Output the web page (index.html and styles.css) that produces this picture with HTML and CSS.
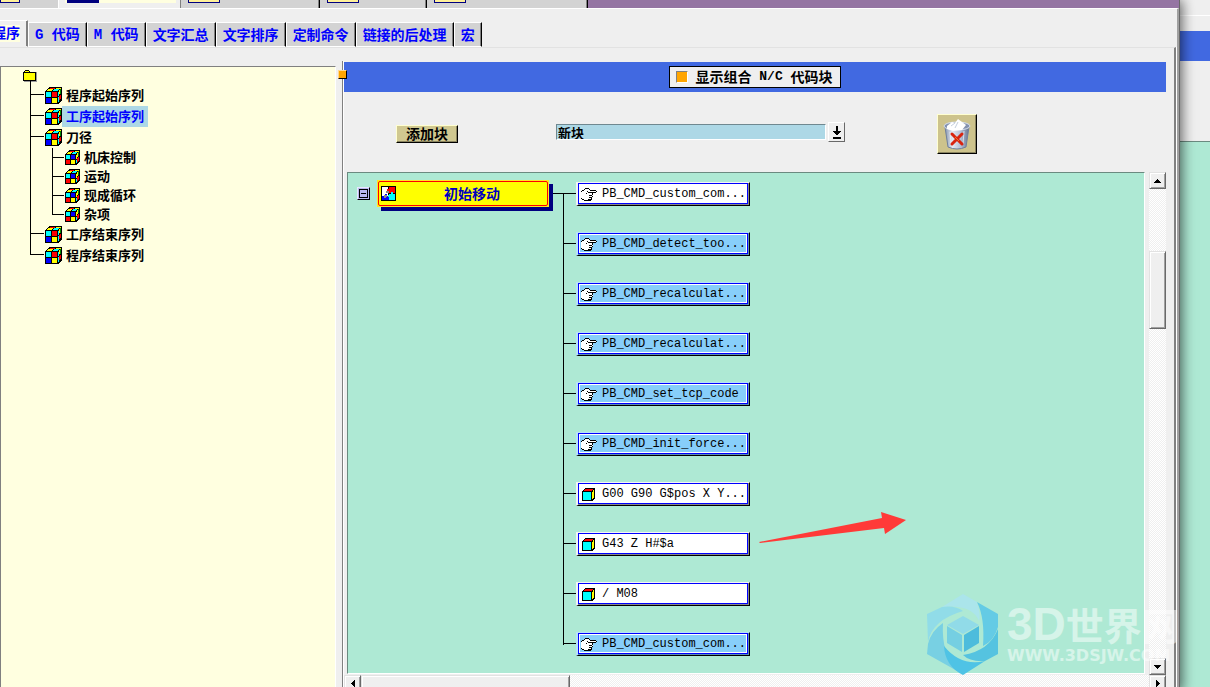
FILE: index.html
```
<!DOCTYPE html>
<html lang="zh-CN">
<head>
<meta charset="utf-8">
<title>后处理构造器</title>
<link rel="stylesheet" href="styles.css">
</head>
<body>
<svg class="defs" width="0" height="0" aria-hidden="true">
  <symbol id="cube-a" viewBox="0 0 17 17">
    <path d="M4 0h13v13l-4 4H0V4z" fill="#000"/>
    <path d="M5 1h5v1H4z M5 1h5v1H5z" fill="#f00"/><path d="M11 1h5v1h-5z" fill="#ff0"/>
    <path d="M3 2h5v1H3z" fill="#ff0"/><path d="M9 2h5v1H9z" fill="#0ff"/>
    <path d="M2 3h5v1H2z" fill="#ff0"/><path d="M8 3h5v1H8z" fill="#0ff"/>
    <path d="M13 5h1v4h-1z" fill="#0ff"/><path d="M13 10h1v5h-1z" fill="#0ff"/>
    <path d="M14 3h1v4h-1z" fill="#ff0"/><path d="M14 9h1v4h-1z" fill="#f00"/>
    <path d="M15 2h1v5h-1z" fill="#080"/><path d="M15 8h1v4h-1z" fill="#f00"/>
    <path d="M1 5h5v5H1z" fill="#0ff"/><path d="M7 5h5v5H7z" fill="#f00"/>
    <path d="M1 11h5v5H1z" fill="#00f"/><path d="M7 11h5v5H7z" fill="#ff0"/>
  </symbol>
  <symbol id="cube-b" viewBox="0 0 15 15">
    <path d="M4 0h11v11l-4 4H0V4z" fill="#000"/>
    <path d="M5 1h4v1H5z" fill="#f00"/><path d="M10 1h4v1h-4z" fill="#ff0"/>
    <path d="M3 2h4v1H3z" fill="#ff0"/><path d="M8 2h4v1H8z" fill="#0ff"/>
    <path d="M2 3h4v1H2z" fill="#ff0"/><path d="M7 3h4v1H7z" fill="#0ff"/>
    <path d="M11 5h1v4h-1z" fill="#ff0"/><path d="M11 10h1v3h-1z" fill="#0ff"/>
    <path d="M13 2h1v4h-1z" fill="#080"/><path d="M13 7h1v4h-1z" fill="#f00"/>
    <path d="M12 3h1v4h-1z" fill="#ff0"/><path d="M12 8h1v4h-1z" fill="#f00"/>
    <path d="M1 5h4v4H1z" fill="#0ff"/><path d="M6 5h4v4H6z" fill="#00f"/>
    <path d="M1 10h4v4H1z" fill="#f00"/><path d="M6 10h4v4H6z" fill="#ff0"/>
  </symbol>
  <symbol id="block" viewBox="0 0 13 13">
    <path d="M3 0h10v10l-3 3H0V3z" fill="#000"/>
    <path d="M3 1h8v1h-1v1H2V2h1z" fill="#f00"/>
    <path d="M12 2v8h-1v1h-1V4h1V2z" fill="#ff0"/>
    <path d="M1 4h8v8H1z" fill="#0ff"/>
  </symbol>
  <symbol id="hand" viewBox="0 0 16 13">
    <path d="M0 4h1V3h2V2h1V1h4v1h1v1h6v2h-4v1h1v2h-1v2h-1v2H3v-1H1v-1H0z" fill="#fff"/>
    <path d="M3 1h1v1H3z M4 0h4v1H4z M8 1h1v1H8z M1 2h2v1H1z M0 3h1v1H0z M9 2h6v1H9z M15 3h1v1h-1z M7 4h8v1H7z M6 3h1v1H6z M5 5h1v1H5z M11 5h1v2h-1z M8 7h3v1H8z M11 8h1v1h-1z M8 9h3v1H8z M10 10h1v2h-1z M7 11h3v1H7z M3 12h7v1H3z M1 11h2v1H1z M0 10h1v1H0z" fill="#000"/>
  </symbol>
</svg>

<div class="screen">
  <main class="window">
    <div class="filebar">
      <span class="doc cut"><i class="pic"></i></span>
      <span class="doc current"><i class="pic"></i></span>
      <span class="doc third"><i class="pic"></i></span>
      <span class="doc fourth"><i class="pic"></i></span>
      <span class="doc fifth"><i class="pic"></i></span>
    </div>
    <nav class="tabs">
      <button class="tab active"><span>程序</span></button>
      <button class="tab"><span class="latin">G </span>代码</button>
      <button class="tab"><span class="latin">M </span>代码</button>
      <button class="tab">文字汇总</button>
      <button class="tab">文字排序</button>
      <button class="tab">定制命令</button>
      <button class="tab">链接的后处理</button>
      <button class="tab">宏</button>
    </nav>

    <div class="panel">
      <aside class="sidebar">
        <div class="root">
          <svg width="14" height="12" viewBox="0 0 14 12" shape-rendering="crispEdges"><path d="M2 2h12v10H1z" fill="#999"/><path d="M2 0h4v1h1v1h6v9H0V2h1V1h1z" fill="#000"/><path d="M2 1h4v1H2z M1 3h11v7H1z" fill="#ff0"/></svg>
        </div>
        <ul class="tree">
          <li><div class="node"><svg class="cube"><use href="#cube-a"/></svg><span>程序起始序列</span></div></li>
          <li><div class="node selected"><svg class="cube"><use href="#cube-a"/></svg><span>工序起始序列</span></div></li>
          <li><div class="node"><svg class="cube"><use href="#cube-a"/></svg><span>刀径</span></div>
            <ul class="branch">
              <li><div class="node"><svg class="cube"><use href="#cube-b"/></svg><span>机床控制</span></div></li>
              <li><div class="node"><svg class="cube"><use href="#cube-b"/></svg><span>运动</span></div></li>
              <li><div class="node"><svg class="cube"><use href="#cube-b"/></svg><span>现成循环</span></div></li>
              <li><div class="node"><svg class="cube"><use href="#cube-b"/></svg><span>杂项</span></div></li>
            </ul>
          </li>
          <li><div class="node"><svg class="cube"><use href="#cube-a"/></svg><span>工序结束序列</span></div></li>
          <li><div class="node"><svg class="cube"><use href="#cube-a"/></svg><span>程序结束序列</span></div></li>
        </ul>
      </aside>
      <div class="splitter"><i class="grip"></i></div>

      <section class="editor">
        <header class="banner">
          <label class="toggle"><input type="checkbox">显示组合<span class="latin"> N/C </span>代码块</label>
        </header>
        <div class="toolbar">
          <button class="add">添加块</button>
          <div class="combo">
            <input type="text" value="新块" aria-label="块类型">
            <button class="drop" aria-label="展开"><svg width="10" height="13" viewBox="0 0 10 13" shape-rendering="crispEdges"><path d="M4 0h2v5h3v1H8v1H7v1H6v1H4V8H3V7H2V6H1V5h3z M1 11h8v2H1z" fill="#000"/></svg></button>
          </div>
          <button class="trash" aria-label="删除">
            <svg width="28" height="31" viewBox="0 0 28 31">
              <defs><linearGradient id="bin" x2="1"><stop offset="0" stop-color="#8593ad"/><stop offset=".3" stop-color="#e4eaf4"/><stop offset=".65" stop-color="#b5c0d6"/><stop offset="1" stop-color="#66748f"/></linearGradient></defs>
              <path d="M2 8h24l-3 20q-9 4-18 0z" fill="url(#bin)" stroke="#70809c"/>
              <ellipse cx="14" cy="7" rx="13" ry="4" fill="#8492af" stroke="#d8e0ee"/>
              <path d="M4 7l5-4 3 1 3-4 4 3 4 3-4 5-9 1-6-2z" fill="#fff"/>
              <path d="M12 9l3-6 M8 7l4-3" stroke="#c5cfdd" fill="none"/>
              <path d="M7 13l1 12 M21 12l-1 13" stroke="#f2f5fa" opacity=".7"/>
              <path d="M9 15l10 10 M19 15L9 25" stroke="#d92410" stroke-width="3" stroke-linecap="round"/>
              <path d="M12 18l4 4" stroke="#f0752a" stroke-width="1"/>
            </svg>
          </button>
        </div>

        <div class="work">
          <div class="canvas">
            <button class="fold" aria-label="折叠"></button>
            <div class="event">
              <svg width="15" height="15" viewBox="0 0 15 15" shape-rendering="crispEdges"><path d="M0 0h15v15H0z"/><path d="M1 1h6v9H1z" fill="#fff"/><path d="M8 1h6v6H8z M6 3h3v3H6z" fill="#f00"/><path d="M1 10h7v4H1z M4 8h2v3H4z" fill="#00f"/><path d="M8 8h6v6H8z M10 6h2v3h-2z M7 9h2v2H7z" fill="#0ff"/><path d="M3 9h3v2H5v1H3z M5 5h3v2H5z" fill="#888"/></svg>
              <span>初始移动</span>
            </div>
            <ul class="blocks">
              <li><div class="cmd"><svg class="hand"><use href="#hand"/></svg>PB_CMD_custom_com...</div></li>
              <li><div class="cmd blue"><svg class="hand"><use href="#hand"/></svg>PB_CMD_detect_too...</div></li>
              <li><div class="cmd blue"><svg class="hand"><use href="#hand"/></svg>PB_CMD_recalculat...</div></li>
              <li><div class="cmd blue"><svg class="hand"><use href="#hand"/></svg>PB_CMD_recalculat...</div></li>
              <li><div class="cmd blue"><svg class="hand"><use href="#hand"/></svg>PB_CMD_set_tcp_code</div></li>
              <li><div class="cmd blue"><svg class="hand"><use href="#hand"/></svg>PB_CMD_init_force...</div></li>
              <li><div class="cmd"><svg class="box"><use href="#block"/></svg>G00 G90 G$pos X Y...</div></li>
              <li><div class="cmd"><svg class="box"><use href="#block"/></svg>G43 Z H#$a</div></li>
              <li><div class="cmd"><svg class="box"><use href="#block"/></svg>/ M08</div></li>
              <li><div class="cmd blue"><svg class="hand"><use href="#hand"/></svg>PB_CMD_custom_com...</div></li>
            </ul>
            <svg class="pointer" width="148" height="32" viewBox="0 0 148 32"><path d="M0 30L123 6 122 0 147 8 126 22 125 16 1 31z" fill="#ff3a38"/></svg>
          </div>
          <div class="vscroll">
            <button aria-label="向上"><svg width="7" height="4" shape-rendering="crispEdges"><path d="M3 0h1v1h1v1h1v1h1v1H0V3h1V2h1V1h1z"/></svg></button>
            <i class="thumb"></i>
            <button aria-label="向下"><svg width="7" height="4" shape-rendering="crispEdges"><path d="M0 0h7v1H6v1H5v1H4v1H3V3H2V2H1V1H0z"/></svg></button>
          </div>
        </div>
        <div class="hscroll">
          <button aria-label="向左"><svg width="4" height="7" shape-rendering="crispEdges"><path d="M3 0h1v7H3V6H2V5H1V4H0V3h1V2h1V1h1z"/></svg></button>
          <i class="thumb"></i>
          <button aria-label="向右"><svg width="4" height="7" shape-rendering="crispEdges"><path d="M0 0h1v1h1v1h1v1h1v1H3v1H2v1H1v1H0z"/></svg></button>
        </div>
      </section>
    </div>
  </main>
  <div class="behind"><i class="ledge"></i><i class="bar"></i><i class="gap"></i><i class="sheet"></i></div>

  <div class="brand">
    <svg width="72" height="81" viewBox="0 0 72 81">
      <path d="M36 0L15 13Q45 10 52 27 54 22 50 8z" fill="#abe5eb"/>
      <path d="M0 20L15 13Q28 11 36 17 5 26 1 48z" fill="#91dce8"/>
      <path d="M1 50Q4 37 16 29 14 62 32 78L0 60z" fill="#78d0e3"/>
      <path d="M17 52Q34 73 58 67L36 81Q18 72 17 52z" fill="#4fc3e5"/>
      <path d="M71 35V60L58 67Q43 68 36 61 62 57 71 35z" fill="#55c3e0"/>
      <path d="M50 8L71 20V33Q67 47 56 52 58 24 50 8z" fill="#64cbe5"/>
      <path d="M36 22l16 9-16 9-16-9z" fill="#91dbe8"/><path d="M20 32l15 9v17l-15-9z" fill="#75cfe2"/><path d="M52 32l-15 9v17l15-9z" fill="#4dbcdc"/>
    </svg>
    <div class="brandtext"><div class="name"><span>3D</span>世界网</div><div class="site">WWW.3DSJW.COM</div></div>
  </div>
</div>
</body>
</html>
```
FILE: styles.css
```
* { box-sizing: border-box; }

body {
  margin: 0;
  height: 100vh;
  overflow: hidden;
  background: #efefef;
  font: bold 14px/20px "Liberation Sans", "Noto Sans CJK SC", sans-serif;
  color: #000;
}

button, input { font: inherit; color: inherit; margin: 0; padding: 0; border-radius: 0; }
ul { list-style: none; margin: 0; padding: 0; }
svg { display: block; flex: none; }
i { display: block; }
.defs { position: absolute; }
.latin { font-family: "Liberation Mono", monospace; font-size: 13px; white-space: pre; }

.screen { position: relative; display: flex; height: 100%; overflow: hidden; }

.window {
  flex: 1;
  display: flex;
  flex-direction: column;
  height: calc(100vh + 5px);
  background: #efefef;
  border-right: 1px solid #696969;
  box-shadow: 2px 0 12px rgba(0, 0, 0, .6);
  position: relative;
}

/* Bottom edge of the document tabs */
.filebar { display: flex; flex: none; height: 8px; background: #9575a3; }
.doc { background: #d3d3d3; border-right: 1px solid #000; box-shadow: inset -1px 0 #808080, 0 1px #fff; }
.doc .pic { width: 32px; height: 3px; background: #fff09a; border: solid #00007f; border-width: 0 1px 1px; margin-left: 7px; }
.doc.cut { width: 59px; border-right: 1px solid #fff; box-shadow: 0 1px #fff; }
.doc.cut .pic { width: 20px; margin-left: 0; }
.doc.current { width: 122px; background: #efefef; border-right-color: #808080; box-shadow: none; padding: 0 4px 5px 6px; }
.doc.current .pic { width: auto; margin: 0; background: linear-gradient(90deg, #00007f 32px, #ffffe0 32px); height: 3px; border: 0; border-left: 2px solid #ffffe0; }
.doc.third { width: 139px; }
.doc.fourth { width: 107px; }
.doc.fifth { width: 161px; }

.tabs {
  flex: none;
  display: flex;
  align-items: flex-end;
  height: 39px;
  border-top: 1px solid #fff;
  border-right: 2px solid #a0a0a0;
}
.tab {
  height: 25px;
  padding: 0 6px;
  color: #00f;
  background: #d3d3d3;
  border: 1px solid #fff;
  border-right-color: #000;
  box-shadow: inset -1px 0 #808080;
  white-space: nowrap;
  line-height: 22px;
}
.tab .latin { font-size: 14px; }
.tab.active { height: 27px; margin-left: -15px; padding-right: 7px; background: #efefef; border-right-color: #808080; border-bottom-color: #efefef; }
.tab.active span { display: block; height: 17px; line-height: 17px; background: #ffffe0; }

.panel {
  flex: 1;
  display: flex;
  min-height: 0;
  padding-right: 8px;
  border-top: 1px solid #e2e2e2;
  border-right: 2px solid #808080;
  margin-right: 3px;
  box-shadow: 1px 0 #fff, 3px 0 #a0a0a0;
}

.sidebar {
  flex: none;
  width: 336px;
  margin-top: 18px;
  background: #ffffe0;
  border: solid #808080;
  border-width: 1px 0 0 1px;
  border-right: 1px solid #fff;
  font-size: 13px;
}
.root { height: 18px; padding: 3px 0 0 22px; }
.tree { padding-left: 29px; }
.tree li { position: relative; padding-left: 15px; }
.tree li::before { content: ""; position: absolute; left: 0; top: 0; bottom: 0; border-left: 1px solid #000; }
.tree > li:first-child::before { top: -4px; }
.tree li::after { content: ""; position: absolute; left: 0; top: 9px; width: 14px; border-top: 1px solid #000; }
.tree li:last-child::before { bottom: auto; height: 10px; }
.node { display: flex; align-items: center; height: 21px; line-height: 21px; }
.node span { padding: 0 4px; }
.node.selected span { background: #add8e6; color: #00f; }
.cube { width: 17px; height: 17px; shape-rendering: crispEdges; }
.tree .branch { padding-left: 7px; }
.tree .branch li { padding-left: 13px; }
.tree .branch li::after { width: 12px; }
.branch .node { height: 19px; line-height: 19px; }
.branch .cube { width: 15px; height: 15px; }

.splitter { flex: none; width: 8px; margin-top: 13px; position: relative; border-right: 1px solid #fff; box-shadow: inset -1px 0 #808080; }
.grip { position: absolute; left: 2px; top: 9px; width: 9px; height: 9px; background: #ffa500; border: 1px solid #ffd890; border-right-color: #000; border-bottom-color: #000; z-index: 1; }

.editor { flex: 1; min-width: 0; display: flex; flex-direction: column; padding-top: 14px; }
.banner { flex: none; display: flex; align-items: center; justify-content: center; height: 30px; background: #4169e1; }
.toggle { display: flex; align-items: center; height: 22px; padding: 0 7px 0 6px; background: #efefef; border: 1px solid #000; white-space: pre; }
.toggle input { appearance: none; width: 12px; height: 12px; margin-right: 7px; background: #ffa500; border: 1px solid #808080; border-right-color: #fff; border-bottom-color: #fff; }

.toolbar { flex: none; display: flex; align-items: center; height: 80px; padding: 4px 189px 0 52px; }
.add { height: 18px; width: 62px; line-height: 15px; background: #d0c890; border: 1px solid #ffffd0; border-right-color: #000; border-bottom-color: #000; box-shadow: inset -1px -1px #8a8460; }
.combo { flex: 1; display: flex; align-items: center; gap: 2px; margin: 0 92px 0 98px; min-width: 0; padding-bottom: 4px; }
.combo input { flex: 1; min-width: 0; height: 16px; padding: 0 1px; font-size: 13px; line-height: 14px; background: #add8e6; border: 1px solid #fff; border-top-color: #708890; border-left-color: #708890; }
.drop { display: flex; align-items: center; justify-content: center; width: 17px; height: 20px; background: #efefef; border: 1px solid #fff; border-right-color: #696969; border-bottom-color: #696969; }
.trash { display: flex; align-items: center; justify-content: center; width: 40px; height: 40px; background: #cdc38c; border: 1px solid #ffffd0; border-right-color: #000; border-bottom-color: #000; box-shadow: inset -1px -1px #8a8460; }

.work { flex: 1; display: flex; min-height: 0; padding-left: 3px; }
.canvas {
  flex: 1;
  position: relative;
  display: flex;
  align-items: flex-start;
  margin-right: 4px;
  margin-bottom: 1px;
  background: #aee9d4;
  border: 1px solid #fff;
  border-left-color: #6b8a80;
  border-top-color: #6b8a80;
  overflow: hidden;
}
.fold { width: 13px; height: 13px; margin: 14px 0 0 9px; border: 1px solid #e8e8ff; border-right-color: #000; border-bottom-color: #000; background: linear-gradient(#000, #000) center / 5px 1px no-repeat #b8b8ee; box-shadow: inset 0 0 0 1px #b8b8ee, inset 0 0 0 2px #000; }
.event { display: flex; align-items: center; width: 172px; height: 27px; margin: 7px 0 0 7px; padding-left: 3px; background: #ff0; color: #0000c0; border: 1px solid #ffe820; box-shadow: 4px 4px #000080; position: relative; }
.event::before { content: ""; position: absolute; inset: 0; border: 1px solid #f00; border-radius: 2px; }
.event span { flex: 1; text-align: center; }
.event::after { content: ""; position: absolute; left: 175px; top: 12px; width: 10px; border-top: 1px solid #000; }
.blocks { margin-left: 14px; padding-top: 9px; display: flex; flex-direction: column; }
.blocks li { position: relative; height: 50px; padding-left: 13px; }
.blocks li::before { content: ""; position: absolute; left: 0; top: 11px; bottom: -11px; width: 13px; border-left: 1px solid #000; border-top: 1px solid #000; }
.blocks li:last-child::before { bottom: auto; height: 1px; }
.cmd {
  position: relative;
  isolation: isolate;
  display: flex;
  align-items: center;
  width: 174px;
  height: 24px;
  font: 12px/20px "Liberation Mono", monospace;
  white-space: pre;
  background: #888;
  border: solid;
  border-width: 1px 1px 1px 2px;
  border-color: #f6f6f6 #000 #000 #f0f4f6;
  padding-left: 3px;
}
.cmd::before { content: ""; position: absolute; z-index: -1; inset: 0 1px 1px 0; background: #fff; border: 1px solid #00f; }
.cmd.blue { background: #5a8fb4; border-top-color: #b8e2fb; border-left-color: #b8e2fb; }
.cmd.blue::before { background: #87cefa; box-shadow: inset 0 0 0 1px #fff; }
.cmd svg { shape-rendering: crispEdges; }
.hand { width: 16px; height: 13px; margin-right: 5px; }
.box { width: 13px; height: 13px; margin: 0 7px 0 1px; }
.pointer { position: absolute; left: 411px; top: 339px; }

.vscroll, .hscroll { flex: none; display: flex; background: repeating-conic-gradient(#fff 0 25%, #efefef 0 50%) 0 0 / 2px 2px; }
.vscroll { width: 17px; flex-direction: column; }
.hscroll { height: 17px; }
.vscroll button, .hscroll button, .thumb {
  flex: none;
  display: flex;
  align-items: center;
  justify-content: center;
  width: 17px;
  height: 17px;
  background: #efefef;
  border: 1px solid #e2e2e2;
  border-right-color: #696969;
  border-bottom-color: #696969;
  box-shadow: inset 1px 1px #fff, inset -1px -1px #a0a0a0;
}
.vscroll .thumb { height: 78px; margin: 62px 0 auto; }
.hscroll .thumb { width: 209px; margin-right: auto; }

/* Second window showing at the right edge */
.behind { flex: none; width: 30px; display: flex; flex-direction: column; }
.ledge { height: 31px; background: linear-gradient(#fff, #fff) 0 15px / 100% 1px no-repeat #efefef; }
.bar { height: 30px; background: #4169e1; }
.gap { height: 81px; border-bottom: 1px solid #6b8a80; }
.sheet { flex: 1; background: #aee9d4; }

.brand { position: absolute; right: 25px; bottom: 12px; display: flex; gap: 8px; align-items: flex-end; z-index: 2; pointer-events: none; }
.brandtext { width: 178px; padding-bottom: 9px; color: #fff; opacity: .5; white-space: nowrap; }
.name { display: flex; height: 44px; font: bold 38px/44px "Noto Sans CJK SC", sans-serif; }
.name span { font: bold 46px/44px "Liberation Sans", sans-serif; }
.site { font: bold 16px/20px "DejaVu Sans", sans-serif; }
```
